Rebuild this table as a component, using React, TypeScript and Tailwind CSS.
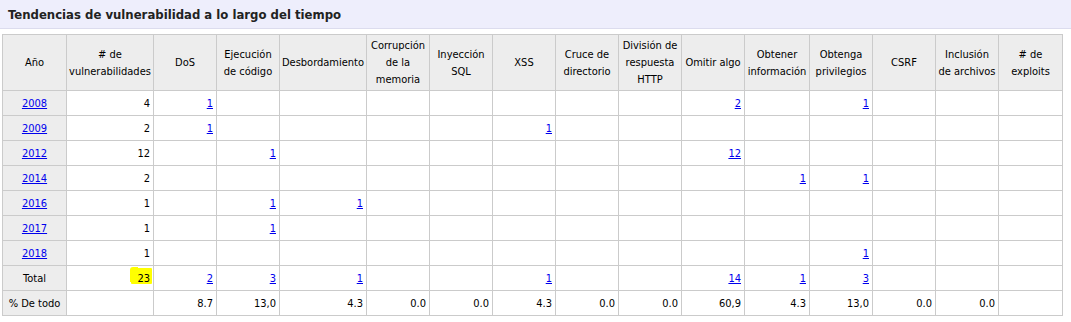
const headers = [
  ["Año"],
  ["# de", "vulnerabilidades"],
  ["DoS"],
  ["Ejecución", "de código"],
  ["Desbordamiento"],
  ["Corrupción", "de la", "memoria"],
  ["Inyección", "SQL"],
  ["XSS"],
  ["Cruce de", "directorio"],
  ["División de", "respuesta", "HTTP"],
  ["Omitir algo"],
  ["Obtener", "información"],
  ["Obtenga", "privilegios"],
  ["CSRF"],
  ["Inclusión", "de archivos"],
  ["# de", "exploits"],
];

const widths = [64, 87, 63, 63, 87, 63, 63, 63, 63, 63, 63, 65, 63, 63, 63, 64];

// cells after the count column: DoS .. exploits (14 columns)
type Row = { year: string; count: string; cells: (string | null)[] };

const rows: Row[] = [
  { year: "2008", count: "4", cells: ["1", null, null, null, null, null, null, null, "2", null, "1", null, null, null] },
  { year: "2009", count: "2", cells: ["1", null, null, null, null, "1", null, null, null, null, null, null, null, null] },
  { year: "2012", count: "12", cells: [null, "1", null, null, null, null, null, null, "12", null, null, null, null, null] },
  { year: "2014", count: "2", cells: [null, null, null, null, null, null, null, null, null, "1", "1", null, null, null] },
  { year: "2016", count: "1", cells: [null, "1", "1", null, null, null, null, null, null, null, null, null, null, null] },
  { year: "2017", count: "1", cells: [null, "1", null, null, null, null, null, null, null, null, null, null, null, null] },
  { year: "2018", count: "1", cells: [null, null, null, null, null, null, null, null, null, null, "1", null, null, null] },
];

const totals = ["2", "3", "1", null, null, "1", null, null, "14", "1", "3", null, null, null];
const percents = ["8.7", "13,0", "4.3", "0.0", "0.0", "4.3", "0.0", "0.0", "60,9", "4.3", "13,0", "0.0", "0.0", null];

const cell = "border border-[#cbcbcb] h-[25px] px-[3px] text-right align-middle";
const grayCell = "border border-[#cbcbcb] h-[25px] px-[3px] text-center align-middle bg-[#ededed]";
const link = "text-[#0000ee] underline";

export default function App() {
  return (
    <div className="w-[1071px] h-[322px] bg-white text-black font-['DejaVu_Sans_Condensed','Open_Sans',sans-serif] text-[11px]">
      <div className="h-[29px] bg-[#eeeefc] border-b border-[#dcdcee] pl-2 flex items-center">
        <h2 className="text-[13px] font-bold text-[#222] leading-none">
          Tendencias de vulnerabilidad a lo largo del tiempo
        </h2>
      </div>

      <table className="mt-[5px] ml-[2px] border-collapse table-fixed w-[1060px] leading-[17px]">
        <colgroup>
          {widths.map((w, i) => (
            <col key={i} style={{ width: w }} />
          ))}
        </colgroup>
        <thead>
          <tr className="h-[56px]">
            {headers.map((lines, i) => (
              <th
                key={i}
                className="border border-[#cbcbcb] bg-[#ededed] font-normal text-center align-middle px-0 whitespace-nowrap"
              >
                {lines.map((l, j) => (
                  <div key={j}>{l}</div>
                ))}
              </th>
            ))}
          </tr>
        </thead>
        <tbody>
          {rows.map((r) => (
            <tr key={r.year}>
              <td className={grayCell}>
                <a href="#" className={link}>{r.year}</a>
              </td>
              <td className={cell}>{r.count}</td>
              {r.cells.map((c, i) => (
                <td key={i} className={cell}>
                  {c && <a href="#" className={link}>{c}</a>}
                </td>
              ))}
            </tr>
          ))}

          <tr>
            <td className={grayCell}>Total</td>
            <td className={`${cell} relative`}>
              {/* yellow marker behind the total */}
              <span className="absolute right-[1px] top-[2px] w-[21px] h-[16px] bg-[#ffff00] rounded-[1px]" />
              <span className="absolute right-[15px] top-[1px] w-[8px] h-[15px] bg-[#ffff00] rounded-tl-[3px]" />
              <span className="relative">23</span>
            </td>
            {totals.map((c, i) => (
              <td key={i} className={cell}>
                {c && <a href="#" className={link}>{c}</a>}
              </td>
            ))}
          </tr>

          <tr>
            <td className={`${grayCell} whitespace-nowrap`}>% De todo</td>
            <td className={cell}></td>
            {percents.map((c, i) => (
              <td key={i} className={cell}>{c}</td>
            ))}
          </tr>
        </tbody>
      </table>
    </div>
  );
}
